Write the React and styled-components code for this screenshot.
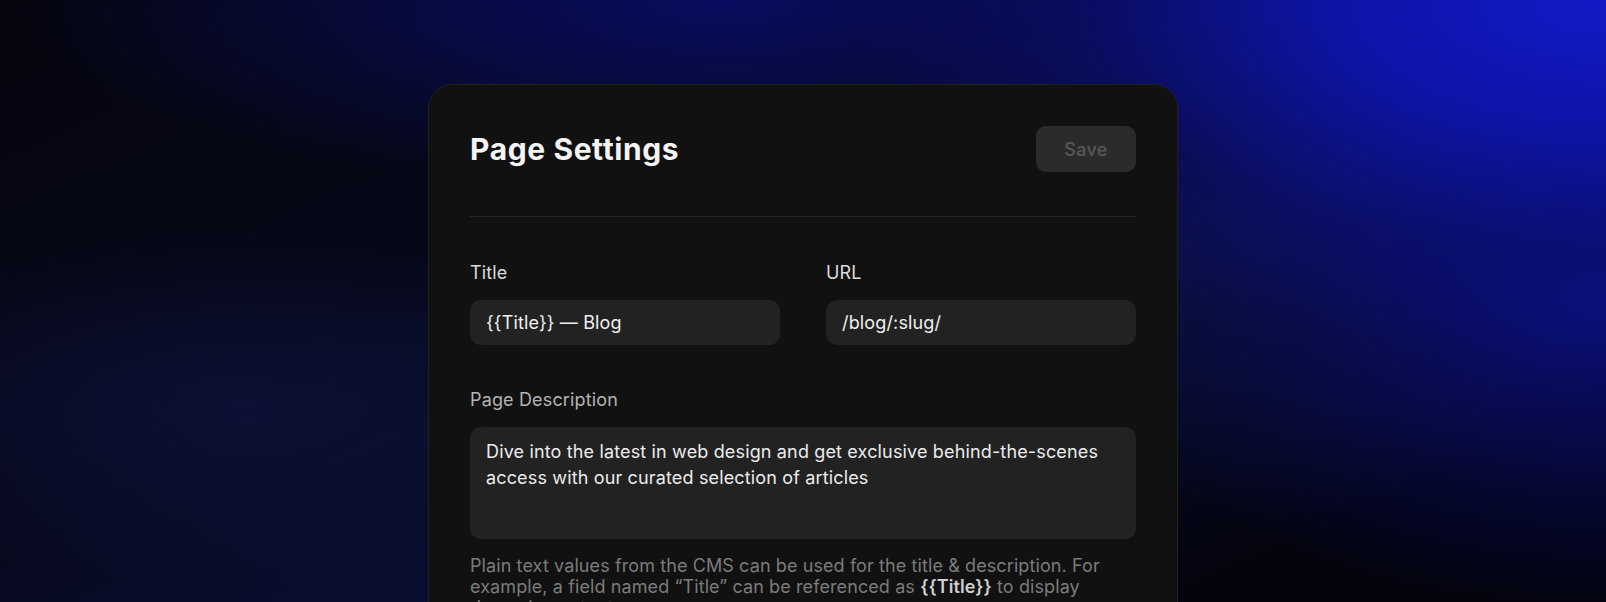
import React from 'react';
import styled, { createGlobalStyle } from 'styled-components';

const GlobalStyle = createGlobalStyle`
  html, body {
    margin: 0;
    padding: 0;
    background: #04050f;
  }
  * {
    box-sizing: border-box;
  }
`;

const Page = styled.div`
  height: 602px;
  overflow: hidden;
  display: flex;
  justify-content: center;
  padding-top: 84px;
  font-family: Inter, "Noto Sans", sans-serif;
  background:
    radial-gradient(ellipse 55% 70% at 100% 0%, #1419c6 0%, #0f14a8 30%, rgba(10, 14, 120, 0.55) 60%, rgba(10, 14, 120, 0) 85%),
    radial-gradient(ellipse 40% 60% at 100% 50%, rgba(12, 17, 150, 0.8) 0%, rgba(12, 17, 150, 0.3) 50%, rgba(12, 17, 150, 0) 85%),
    radial-gradient(ellipse 55% 40% at 45% 0%, rgba(9, 14, 110, 0.85) 0%, rgba(9, 14, 110, 0) 80%),
    radial-gradient(ellipse 35% 35% at 15% 68%, rgba(14, 20, 64, 0.7) 0%, rgba(14, 20, 64, 0) 85%),
    linear-gradient(155deg, #05060f 0%, #060818 35%, #0a0f32 60%, #03040d 85%);
`;

const Card = styled.div`
  width: 750px;
  flex-shrink: 0;
  align-self: flex-start;
  background: #111111;
  border: 1px solid #1f1f1f;
  border-radius: 24px;
  padding: 41px 41px 60px;
`;

const Header = styled.div`
  display: flex;
  align-items: center;
  justify-content: space-between;
  height: 46px;
`;

const Heading = styled.h1`
  margin: 0;
  font-size: 30px;
  font-weight: 700;
  letter-spacing: 0.6px;
  color: #f4f4f4;
`;

const SaveButton = styled.button`
  width: 100px;
  height: 46px;
  border: none;
  border-radius: 10px;
  background: #2b2b2b;
  color: #585858;
  font-family: inherit;
  font-size: 18px;
  font-weight: 500;
  letter-spacing: 0.3px;
`;

const Divider = styled.hr`
  border: none;
  height: 1px;
  background: #262626;
  margin: 44px 0 45px;
`;

const Row = styled.div`
  display: grid;
  grid-template-columns: 1fr 1fr;
  gap: 46px;
  margin-bottom: 44px;
`;

const Field = styled.div`
  display: flex;
  flex-direction: column;
  gap: 16px;
`;

const Label = styled.label`
  font-size: 18px;
  line-height: 22px;
  font-weight: 400;
  letter-spacing: 0.15px;
  color: ${({ $muted }) => ($muted ? '#b4b4b4' : '#dcdcdc')};
`;

const Input = styled.div`
  height: 45px;
  display: flex;
  align-items: center;
  padding: 0 16px;
  border-radius: 11px;
  background: #222222;
  color: #f0f0f0;
  font-size: 18px;
  letter-spacing: 0.15px;
`;

const TextArea = styled.div`
  height: 112px;
  padding: 12px 16px;
  border-radius: 11px;
  background: #222222;
  color: #ececec;
  font-size: 18px;
  line-height: 25.5px;
  letter-spacing: 0.15px;
`;

const Help = styled.p`
  margin: 16px 0 0;
  font-size: 18px;
  line-height: 21px;
  letter-spacing: 0.1px;
  color: #7c7c7c;
`;

const Token = styled.span`
  color: #cfcfcf;
  font-weight: 600;
`;

export default function App() {
  return (
    <>
      <GlobalStyle />
      <Page>
        <Card>
          <Header>
            <Heading>Page Settings</Heading>
            <SaveButton>Save</SaveButton>
          </Header>
          <Divider />
          <Row>
            <Field>
              <Label>Title</Label>
              <Input>{'{{Title}} — Blog'}</Input>
            </Field>
            <Field>
              <Label>URL</Label>
              <Input>/blog/:slug/</Input>
            </Field>
          </Row>
          <Field>
            <Label $muted>Page Description</Label>
            <TextArea>
              Dive into the latest in web design and get exclusive behind-the-scenes
              access with our curated selection of articles
            </TextArea>
          </Field>
          <Help>
            Plain text values from the CMS can be used for the title &amp; description. For
            example, a field named “Title” can be referenced as <Token>{'{{Title}}'}</Token> to display
            dynamic content.
          </Help>
        </Card>
      </Page>
    </>
  );
}
